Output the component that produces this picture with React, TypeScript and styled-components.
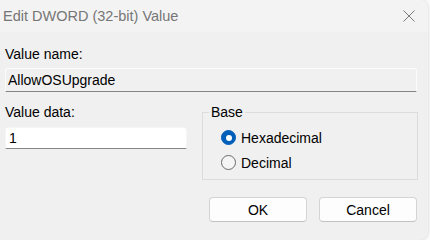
import styled, { createGlobalStyle } from 'styled-components';

const GlobalStyle = createGlobalStyle`
  html, body {
    margin: 0;
    padding: 0;
    background: #fafafa;
  }

  body {
    font-family: 'Liberation Sans', Arial, sans-serif;
    font-size: 14px;
    color: #000;
  }
`;

export default function App() {
  return (
    <>
      <GlobalStyle />
      <Window>
        <TitleBar>
          <Title>Edit DWORD (32-bit) Value</Title>
          <CloseButton aria-label='Close'>
            <svg width='12' height='12' viewBox='0 0 12 12'>
              <path d='M0.5 0.5 L11.5 11.5 M11.5 0.5 L0.5 11.5' stroke='#7a7a7a' strokeWidth='1' />
            </svg>
          </CloseButton>
        </TitleBar>

        <Body>
          <Label>Value name:</Label>
          <NameField>AllowOSUpgrade</NameField>

          <DataRow>
            <DataColumn>
              <Label>Value data:</Label>
              <DataField defaultValue='1' />
            </DataColumn>

            <BaseGroup>
              <Legend>Base</Legend>
              <RadioList>
                <RadioRow>
                  <RadioDot $checked />
                  Hexadecimal
                </RadioRow>
                <RadioRow>
                  <RadioDot />
                  Decimal
                </RadioRow>
              </RadioList>
            </BaseGroup>
          </DataRow>

          <ButtonRow>
            <Button>OK</Button>
            <Button>Cancel</Button>
          </ButtonRow>
        </Body>
      </Window>
    </>
  );
}

const Window = styled.div`
  width: 428px;
  height: 240px;
  background: #f0f0f0;
  border-top-right-radius: 8px;
  border-bottom-right-radius: 8px;
  box-shadow: 0 0 3px rgba(0, 0, 0, 0.18);
  overflow: hidden;
  display: flex;
  flex-direction: column;
`;

const TitleBar = styled.div`
  height: 32px;
  flex-shrink: 0;
  display: flex;
  align-items: center;
  justify-content: space-between;
  background: #f3f3f3;
  padding: 0 13px 0 3px;
`;

const Title = styled.span`
  font-size: 14.5px;
  color: #767676;
`;

const CloseButton = styled.div`
  display: flex;
  align-items: center;
  width: 12px;
  height: 12px;
`;

const Body = styled.div`
  display: flex;
  flex-direction: column;
  padding: 14px 11px 0 5px;
`;

const Label = styled.div`
  line-height: 16px;
  height: 16px;
`;

const NameField = styled.div`
  box-sizing: border-box;
  height: 24px;
  margin-top: 6px;
  padding: 0 2px;
  display: flex;
  align-items: center;
  background: #f0f0f0;
  border: 1px solid #fbfbfb;
  border-bottom-color: #868686;
  border-radius: 3px 3px 0 0;
`;

const DataRow = styled.div`
  display: grid;
  grid-template-columns: 182px 216px;
  column-gap: 15px;
  margin-top: 12px;
`;

const DataColumn = styled.div`
  display: flex;
  flex-direction: column;
`;

const DataField = styled.input`
  box-sizing: border-box;
  height: 22px;
  margin: 7px 0 0;
  padding: 0 3px;
  font: inherit;
  color: #000;
  background: #fff;
  border: 1px solid #f5f5f5;
  border-bottom-color: #868686;
  border-radius: 3px 3px 0 0;
  outline: none;
`;

const BaseGroup = styled.fieldset`
  box-sizing: border-box;
  height: 76px;
  margin: 0;
  padding: 5px 6px 0;
  border: 1px solid #dcdcdc;
  border-radius: 0;
`;

const Legend = styled.legend`
  padding: 0 2px;
  line-height: 16px;
`;

const RadioList = styled.div`
  display: flex;
  flex-direction: column;
  margin-left: 12px;
`;

const RadioRow = styled.label`
  display: flex;
  align-items: center;
  gap: 5px;
  height: 25px;
`;

const RadioDot = styled.span<{ $checked?: boolean }>`
  box-sizing: border-box;
  width: 15px;
  height: 15px;
  border-radius: 50%;
  flex-shrink: 0;
  display: flex;
  align-items: center;
  justify-content: center;
  background: ${({ $checked }) => ($checked ? '#005fb8' : '#f5f5f5')};
  border: 1px solid ${({ $checked }) => ($checked ? '#005fb8' : '#6a6a6a')};

  &::after {
    content: '';
    display: ${({ $checked }) => ($checked ? 'block' : 'none')};
    width: 6px;
    height: 6px;
    border-radius: 50%;
    background: #fff;
  }
`;

const ButtonRow = styled.div`
  display: flex;
  justify-content: flex-end;
  gap: 12px;
  margin-top: 17px;
`;

const Button = styled.button`
  box-sizing: border-box;
  width: 98px;
  height: 25px;
  padding: 0;
  font: inherit;
  color: #000;
  background: #fdfdfd;
  border: 1px solid #d4d4d4;
  border-bottom-color: #c2c2c2;
  border-radius: 4px;
`;
